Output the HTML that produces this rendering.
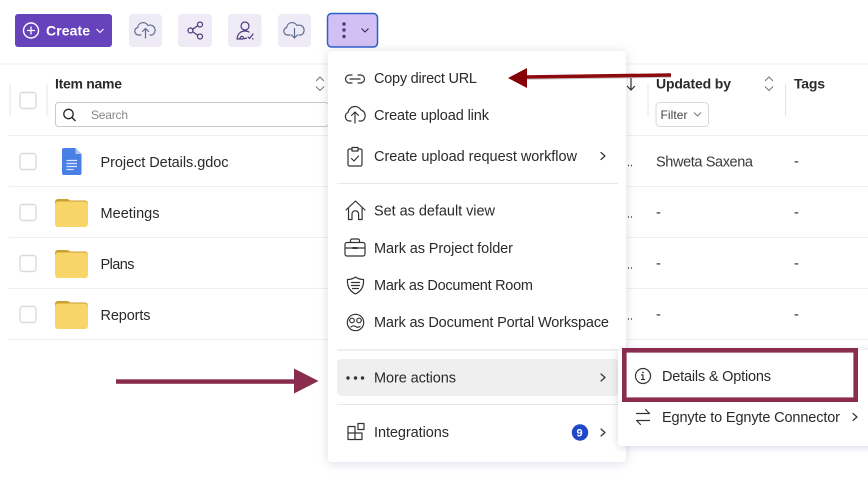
<!DOCTYPE html>
<html lang="en">
<head>
<meta charset="utf-8">
<title>Menu</title>
<style>
html,body{margin:0;padding:0;background:#fff;width:868px;height:478px;overflow:hidden}
svg{display:block}
text{font-family:"Liberation Sans",Arial,sans-serif;font-size:14.5px;fill:#2a2a2a}
.b{font-weight:bold;font-size:14px}
.i{fill:none;stroke:#333;stroke-width:1.2;stroke-linecap:round;stroke-linejoin:round}
.p{fill:none;stroke:#4d3a7a;stroke-width:1.2;stroke-linecap:round;stroke-linejoin:round}
.l{stroke:#efefef;stroke-width:1}
.cb{fill:#fff;stroke:#dcdcdc;stroke-width:1.4}
</style>
</head>
<body>
<svg width="868" height="478" viewBox="0 0 868 478" xmlns="http://www.w3.org/2000/svg">
<rect width="868" height="478" fill="#fff"/>

<!-- toolbar -->
<rect x="15" y="14" width="97" height="33" rx="3" fill="#6643ba"/>
<circle cx="31" cy="30.5" r="7.5" fill="none" stroke="#fff" stroke-width="1.4"/>
<path d="M31 26.500v8M27 30.500h8" stroke="#fff" stroke-width="1.300" fill="none"/>
<text x="46" y="35.500" class="b" style="fill:#fff" textLength="44" lengthAdjust="spacing">Create</text>
<path d="M96.500 29l3.500 3.500 3.500-3.500" fill="none" stroke="#fff" stroke-width="1.100"/>

<rect x="129" y="14" width="33" height="33" rx="4" fill="#eeeaf6"/>
<path class="p" style="stroke:#5d6f8f" d="M141 35h-2.500a3.800 3.800 0 0 1-.8-7.500 5.500 5.500 0 0 1 10.300-2 4.800 4.800 0 0 1 4 9.500H150M145.500 38V28.500M142.500 31.500l3-3 3 3"/>

<rect x="178" y="14" width="34" height="33" rx="4" fill="#eeeaf6"/>
<circle class="p" cx="200" cy="24.500" r="2.500"/><circle class="p" cx="190.500" cy="30.500" r="2.500"/><circle class="p" cx="200" cy="36.500" r="2.500"/>
<path class="p" d="M192.700 29.300l5-3.500M192.700 31.700l5 3.500"/>

<rect x="228" y="14" width="33.500" height="33" rx="4" fill="#eeeaf6"/>
<circle class="p" cx="245" cy="26" r="4"/>
<path class="p" d="M237 39c.5-5 3.500-8 8-8 1.500 0 3 .3 4 1M237 39h6M240 38c1.500-2.500 3-2 3.500 0 .5 1 1.500 1 2 0l1 .5M248 37l1.500 1.500 3.500-4.500M252.500 38.500l.5.500"/>

<rect x="278" y="14" width="33" height="33" rx="4" fill="#eeeaf6"/>
<path class="p" style="stroke:#5d6f8f" d="M290 35h-2.500a3.800 3.800 0 0 1-.8-7.500 5.500 5.500 0 0 1 10.300-2 4.800 4.800 0 0 1 4 9.500H299M294.500 28.500V38M291.500 35l3 3 3-3"/>

<rect x="327.500" y="13.500" width="50" height="33.500" rx="4" fill="#d2bff3" stroke="#2b61c9" stroke-width="1.500"/>
<circle cx="344" cy="24" r="1.700" fill="#4d3a7a"/><circle cx="344" cy="30" r="1.700" fill="#4d3a7a"/><circle cx="344" cy="36.500" r="1.700" fill="#4d3a7a"/>
<path d="M361.500 28.500l3.500 3.500 3.500-3.500" fill="none" stroke="#2b2b55" stroke-width="1.100"/>

<!-- table lines -->
<line class="l" x1="0" y1="64" x2="868" y2="64"/>
<line class="l" x1="9" y1="135.500" x2="868" y2="135.500"/>
<line class="l" x1="9" y1="186.500" x2="868" y2="186.500"/>
<line class="l" x1="9" y1="237.500" x2="868" y2="237.500"/>
<line class="l" x1="9" y1="288.500" x2="868" y2="288.500"/>
<line class="l" x1="9" y1="339.500" x2="868" y2="339.500"/>
<path d="M10 84v32M47 84v32M648 84v32M785.500 84v32" stroke="#e4e4e4" stroke-width="1"/>

<!-- header -->
<rect class="cb" x="20" y="92.500" width="16" height="16" rx="2.500"/>
<text x="55" y="88.500" class="b" style="fill:#2b2b2b" textLength="67" lengthAdjust="spacing">Item name</text>
<path d="M316 81l4-4 4 4M316 86.500l4 4 4-4" fill="none" stroke="#777" stroke-width="1"/>
<rect x="55.500" y="102.500" width="273" height="24" rx="3" fill="#fff" stroke="#c9c9c9"/>
<circle cx="68.500" cy="114" r="4.700" fill="none" stroke="#222" stroke-width="1.300"/>
<path d="M72 117.500l3.500 3.500" stroke="#222" stroke-width="1.300"/>
<text x="91" y="119" style="font-size:12px;fill:#888" textLength="37" lengthAdjust="spacing">Search</text>

<text x="656" y="88.500" class="b" style="fill:#2b2b2b" textLength="75" lengthAdjust="spacing">Updated by</text>
<path d="M765 81l4-4 4 4M765 86.500l4 4 4-4" fill="none" stroke="#777" stroke-width="1"/>
<text x="794" y="88.500" class="b" style="fill:#2b2b2b" textLength="31" lengthAdjust="spacing">Tags</text>
<rect x="656" y="102.500" width="52.500" height="24" rx="4" fill="#fff" stroke="#d8d8d8"/>
<text x="660.500" y="119" style="font-size:12px;fill:#444" textLength="27" lengthAdjust="spacing">Filter</text>
<path d="M694 112.500l3.500 3.500 3.500-3.500" fill="none" stroke="#777" stroke-width="1"/>
<path d="M631 78v12M627 86l4 4 4-4" fill="none" stroke="#333" stroke-width="1.200"/>

<!-- rows -->
<rect class="cb" x="20" y="153.500" width="16" height="16" rx="2.500"/>
<rect class="cb" x="20" y="204.500" width="16" height="16" rx="2.500"/>
<rect class="cb" x="20" y="255.500" width="16" height="16" rx="2.500"/>
<rect class="cb" x="20" y="306.500" width="16" height="16" rx="2.500"/>

<path d="M64 148h11.500l6 6v19a2 2 0 0 1-2 2H64a2 2 0 0 1-2-2v-23a2 2 0 0 1 2-2z" fill="#4a7fe6"/>
<path d="M75.500 148l6 6h-6z" fill="#a9c4f3"/>
<path d="M66.500 160.500h10.500M66.500 163.500h10.500M66.500 166.500h10.500M66.500 169.500h7" stroke="#dbe6fb" stroke-width="1.300"/>

<path d="M55 202a3 3 0 0 1 3-3h9a4 4 0 0 1 3 1.500h15a3 3 0 0 1 3 3V210H55z" fill="#cc9f33"/>
<rect x="55" y="201.500" width="33" height="25.500" rx="3" fill="#f8d568"/>
<path d="M55 253a3 3 0 0 1 3-3h9a4 4 0 0 1 3 1.500h15a3 3 0 0 1 3 3V261H55z" fill="#cc9f33"/>
<rect x="55" y="252.500" width="33" height="25.500" rx="3" fill="#f8d568"/>
<path d="M55 304a3 3 0 0 1 3-3h9a4 4 0 0 1 3 1.500h15a3 3 0 0 1 3 3V312H55z" fill="#cc9f33"/>
<rect x="55" y="303.500" width="33" height="25.500" rx="3" fill="#f8d568"/>

<text x="100.500" y="167" textLength="128" lengthAdjust="spacing">Project Details.gdoc</text>
<text x="100.500" y="218" textLength="59" lengthAdjust="spacing">Meetings</text>
<text x="100.500" y="269" textLength="34" lengthAdjust="spacing">Plans</text>
<text x="100.500" y="320" textLength="50" lengthAdjust="spacing">Reports</text>

<text x="656" y="166.500" style="fill:#3a3a3a" textLength="97" lengthAdjust="spacing">Shweta Saxena</text>
<text x="794" y="166">-</text>
<text x="656" y="217">-</text><text x="794" y="217">-</text>
<text x="656" y="268">-</text><text x="794" y="268">-</text>
<text x="656" y="319">-</text><text x="794" y="319">-</text>
<path d="M628 165.500h1M631 165.500h1M628 217h1M631 217h1M628 268h1M631 268h1M628 319h1M631 319h1" stroke="#444" stroke-width="1.400"/>

<!-- main menu -->
<rect x="328" y="51" width="298" height="411" rx="3" fill="#fff" style="filter:drop-shadow(0 1px 5px rgba(70,60,130,.2))"/>

<path class="i" d="M352 75h-2.500a4 4 0 0 0 0 8h2.500M358 75h2.500a4 4 0 0 1 0 8H358M350 79h10"/>
<text x="374" y="83" textLength="103" lengthAdjust="spacing">Copy direct URL</text>

<path class="i" d="M351 121h-2a4.500 4.500 0 0 1-1-8.500 7 7 0 0 1 13-2.500 6 6 0 0 1 1 11h-3M355 123v-11M351.500 115.500L355 112l3.500 3.500"/>
<text x="374" y="120" textLength="115" lengthAdjust="spacing">Create upload link</text>

<path class="i" d="M352 149h-2.500a1.500 1.500 0 0 0-1.500 1.500v14a1.500 1.500 0 0 0 1.500 1.500h11a1.500 1.500 0 0 0 1.500-1.500v-14a1.500 1.500 0 0 0-1.500-1.500H358M352 147.500h6V151h-6zM351.500 158.500l2.500 2.500 4.500-5"/>
<text x="374" y="161" textLength="203" lengthAdjust="spacing">Create upload request workflow</text>
<path class="i" d="M601 152.500l4 3.500-4 3.500"/>

<line x1="337" y1="183.500" x2="618" y2="183.500" stroke="#e8e8e8"/>

<path class="i" d="M346 210l9.500-9 9.500 9M348.500 208v11.500h3.500v-5.500a3.300 3.300 0 0 1 6.600 0v5.500h3.500V208"/>
<text x="374" y="215.500" textLength="121" lengthAdjust="spacing">Set as default view</text>

<path class="i" d="M347 242.500h16a2 2 0 0 1 2 2v9.500a2 2 0 0 1-2 2h-16a2 2 0 0 1-2-2v-9.500a2 2 0 0 1 2-2zM350.500 242.500v-2a1.500 1.500 0 0 1 1.500-1.500h6a1.500 1.500 0 0 1 1.500 1.500v2M345 248h20"/>
<path d="M352.500 248h5" stroke="#333" stroke-width="2"/>
<text x="374" y="253" textLength="139" lengthAdjust="spacing">Mark as Project folder</text>

<path class="i" d="M355.500 277c2 1.500 5 2.500 8 2.500.5 6.500-2 11.500-8 14.500-6-3-8.500-8-8-14.500 3 0 6-1 8-2.500zM351.500 282.500h8M351.500 285.500h8M352.500 288.500h6"/>
<text x="374" y="290" textLength="159" lengthAdjust="spacing">Mark as Document Room</text>

<circle class="i" cx="355.500" cy="322.500" r="8.200"/>
<circle class="i" cx="352" cy="320.500" r="2.300"/><circle class="i" cx="359" cy="320.500" r="2.300"/>
<path class="i" d="M351 327c1.500-1.500 3-1.500 4.500-.5s3 1 4.500 0"/>
<text x="374" y="327" textLength="235" lengthAdjust="spacing">Mark as Document Portal Workspace</text>

<line x1="337" y1="350" x2="618" y2="350" stroke="#e8e8e8" stroke-width="1.500"/>
<rect x="337" y="359" width="281" height="37" rx="4" fill="#efefef"/>
<circle cx="348" cy="378" r="1.700" fill="#333"/><circle cx="355.500" cy="378" r="1.700" fill="#333"/><circle cx="362.500" cy="378" r="1.700" fill="#333"/>
<text x="374" y="382.500" textLength="82" lengthAdjust="spacing">More actions</text>
<path class="i" d="M601 374l4 3.500-4 3.500"/>
<line x1="337" y1="404.500" x2="618" y2="404.500" stroke="#e8e8e8"/>

<path class="i" d="M348 426.500h7v6.500h-7zM348 433h7v6.500h-7zM355 433h7v6.500h-7zM358 423.500h6v6h-6z"/>
<text x="374" y="437" textLength="75" lengthAdjust="spacing">Integrations</text>
<circle cx="580" cy="432.500" r="8.200" fill="#1e48c9"/>
<text x="576.500" y="436.500" class="b" style="font-size:11px;fill:#fff">9</text>
<path class="i" d="M601 429l4 3.500-4 3.500"/>

<!-- submenu -->
<rect x="618" y="350" width="260" height="96" rx="3" fill="#fff" style="filter:drop-shadow(0 1px 4px rgba(70,60,130,.22))"/>
<rect x="624.300" y="350.300" width="231.400" height="49.400" fill="#fff" stroke="#8a2c4e" stroke-width="4.600"/>
<circle class="i" cx="643" cy="376" r="7.500"/>
<path class="i" d="M641.500 375h1.500v4M641.500 379.500h3"/>
<circle cx="643" cy="372.500" r=".9" fill="#333"/>
<text x="662" y="381" textLength="109" lengthAdjust="spacing">Details &amp; Options</text>
<path class="i" d="M636.500 413.500h13l-4-4M649.500 420.500h-13l4 4"/>
<text x="662" y="422" textLength="178" lengthAdjust="spacing">Egnyte to Egnyte Connector</text>
<path class="i" d="M853 413.500l4 3.500-4 3.500"/>

<!-- annotation arrows -->
<path d="M527 76.800L671 74.800" stroke="#8b8b8b" stroke-width="1" transform="translate(0 2.500)" opacity=".5"/>
<path d="M525 77L671 75" stroke="#8c0a0e" stroke-width="3.600"/>
<path d="M508 78l19-10v20z" fill="#860008"/>

<rect x="116" y="379.300" width="180" height="4.500" fill="#8a2c4e"/>
<path d="M294 368.500l24.500 12.500-24.500 12.500z" fill="#8a2c4e"/>
</svg>
</body>
</html>
